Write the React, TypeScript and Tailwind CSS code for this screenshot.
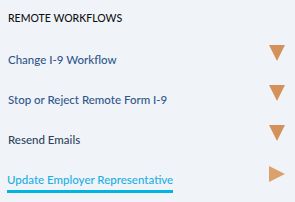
import React from 'react'

const items = [
  { label: 'Change I-9 Workflow', color: 'text-[#31578a]' },
  { label: 'Stop or Reject Remote Form I-9', color: 'text-[#31578a]' },
  { label: 'Resend Emails', color: 'text-[#2f4460]' },
]

function Down() {
  return (
    <svg width="16" height="16" viewBox="0 0 16 16" className="shrink-0">
      <polygon points="0,0 16,0 8,16" fill="#d4925a" />
    </svg>
  )
}

function Right() {
  return (
    <svg width="16" height="16" viewBox="0 0 16 16" className="shrink-0">
      <polygon points="0,0 16,8 0,16" fill="#dba06c" />
    </svg>
  )
}

export default function App() {
  return (
    <div
      className="w-[295px] h-[202px] bg-[#f0f4f9] overflow-hidden"
      style={{ fontFamily: 'Lato, "Open Sans", sans-serif' }}
    >
      <div className="h-[38px] flex items-center px-2 text-[10.5px] font-medium text-[#111]">
        REMOTE WORKFLOWS
      </div>
      {items.map((it) => (
        <div key={it.label} className="h-10 flex items-center justify-between pl-2 pr-[10px]">
          <span className={`text-[11.5px] font-medium ${it.color} pt-[4px]`}>{it.label}</span>
          <div className="-mt-[10px]">
            <Down />
          </div>
        </div>
      ))}
      <div className="h-10 flex items-center justify-between pl-[7px] pr-[10px]">
        <span className="text-[11.5px] font-medium text-[#1daee3] border-b-[3px] border-[#00b5e2] pt-[8px] pb-[2px]">
          Update Employer Representative
        </span>
        <div className="-mt-[8px]">
          <Right />
        </div>
      </div>
    </div>
  )
}
